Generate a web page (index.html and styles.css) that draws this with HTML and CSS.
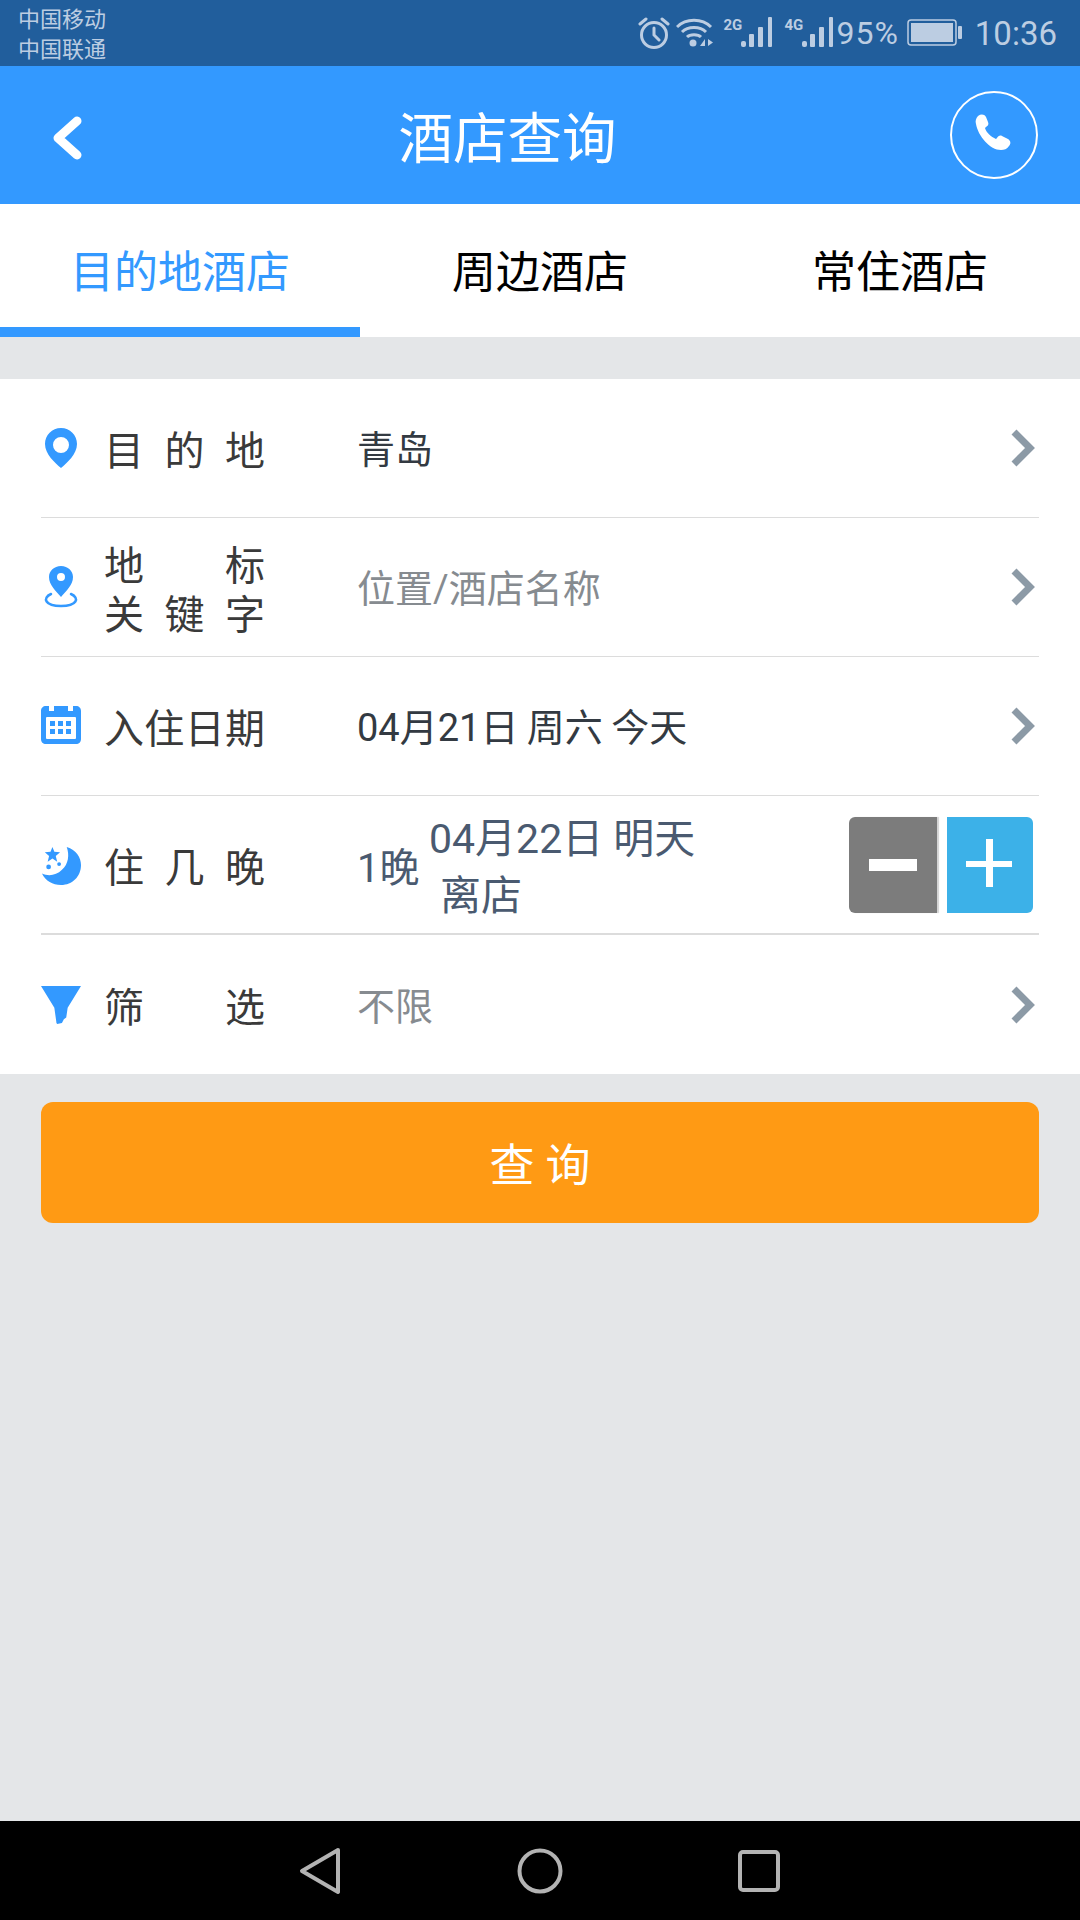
FILE: index.html
```html
<!DOCTYPE html>
<html>
<head>
    <title>酒店查询</title>
    <link rel="stylesheet" href="styles.css">
</head>
<body>
    <div class="app">
        <div class="status-bar">
            <div class="carriers">
                <div>中国移动</div>
                <div>中国联通</div>
            </div>
            <div class="status-icons">
                <svg class="st-alarm" width="32" height="34" viewBox="0 0 32 34" fill="none" stroke="#bccde2" stroke-width="3">
                    <circle cx="16" cy="19" r="12.500"/>
                    <path d="M16 12v7l5 5M2 8l6-5M30 8l-6-5" stroke-linecap="round"/>
                </svg>
                <svg class="st-wifi" width="38" height="32" viewBox="0 0 38 32" fill="none" stroke="#bccde2" stroke-width="3">
                    <path d="M1 10c9-9 25-9 34 0M6 15c6-6 18-6 24 0M11 20c3-3 11-3 14 0"/>
                    <circle cx="17" cy="26" r="3.500" fill="#bccde2" stroke="none"/>
                    <path d="M29 22l-5 7h5zM32 22l5 3.500-5 3.500z" fill="#bccde2" stroke="none"/>
                </svg>
                <div class="signal">
                    <span class="net">2G</span>
                    <svg width="34" height="32" viewBox="0 0 34 32" fill="#bccde2">
                        <rect x="0" y="24" width="5" height="6" rx="2"/>
                        <rect x="8" y="17" width="5" height="13" rx="1"/>
                        <rect x="17" y="10" width="5" height="20" rx="1"/>
                        <rect x="27" y="0" width="4" height="30" rx="1"/>
                    </svg>
                </div>
                <div class="signal">
                    <span class="net">4G</span>
                    <svg width="34" height="32" viewBox="0 0 34 32" fill="#bccde2">
                        <rect x="0" y="24" width="5" height="6" rx="2"/>
                        <rect x="8" y="17" width="5" height="13" rx="1"/>
                        <rect x="17" y="10" width="5" height="20" rx="1"/>
                        <rect x="27" y="0" width="4" height="30" rx="1"/>
                    </svg>
                </div>
                <span class="pct">95%</span>
                <svg class="st-batt" width="56" height="28" viewBox="0 0 56 28" fill="none">
                    <rect x="1" y="1" width="48" height="25" rx="3" stroke="#bccde2" stroke-width="1.500"/>
                    <rect x="4" y="4" width="42" height="19" fill="#bccde2"/>
                    <rect x="51" y="7" width="4" height="13" rx="1" fill="#bccde2"/>
                </svg>
                <span class="clock">10:36</span>
            </div>
        </div>

        <div class="header">
            <svg class="back" width="36" height="44" viewBox="0 0 36 44" fill="none" stroke="#fff" stroke-width="9" stroke-linecap="round" stroke-linejoin="round">
                <path d="M27 5L8 22l19 17"/>
            </svg>
            <h1>酒店查询</h1>
            <div class="call-btn">
                <svg width="44" height="44" viewBox="0 0 44 44" fill="#fff">
                    <path d="M6 3c3-2 6-2 8 1l2 5c1 2 0 4-2 5l-1 1c1 4 6 9 11 11l1-1c1-2 3-3 5-2l6 3c3 2 3 5 1 7-2 3-5 4-8 4C18 37 6 23 4 11c-1-3 0-6 2-8z"/>
                </svg>
            </div>
        </div>

        <div class="tabs">
            <div class="tab active">目的地酒店</div>
            <div class="tab">周边酒店</div>
            <div class="tab">常住酒店</div>
        </div>

        <div class="form">
            <div class="row">
                <div class="row-icon">
                    <svg width="34" height="42" viewBox="0 0 34 42">
                        <path fill-rule="evenodd" fill="#3399ff" d="M17 1C8 1 1 8 1 17c0 10 10 19 16 24 6-5 16-14 16-24C33 8 26 1 17 1zm0 9a8 8 0 1 1 0 16 8 8 0 0 1 0-16z"/>
                    </svg>
                </div>
                <div class="label">目的地</div>
                <div class="value dark">青岛</div>
                <svg class="arrow" width="26" height="38" viewBox="0 0 26 38" fill="none" stroke="#8c9aa6" stroke-width="7"><path d="M4 3l16 16L4 35"/></svg>
            </div>
            <div class="row">
                <div class="row-icon">
                    <svg width="36" height="42" viewBox="0 0 36 42">
                        <path fill-rule="evenodd" fill="#3399ff" d="M18 0C11 0 6 5 6 11c0 8 7 14 12 20 5-6 12-12 12-20C30 5 25 0 18 0zm0 7a4 4 0 1 1 0 8 4 4 0 0 1 0-8z"/>
                        <path d="M8 28c-9 4-6 12 10 12s19-8 10-12" fill="none" stroke="#3399ff" stroke-width="2.500" stroke-linecap="round"/>
                    </svg>
                </div>
                <div class="label two-line">
                    <div>地标</div>
                    <div>关键字</div>
                </div>
                <div class="value muted">位置/酒店名称</div>
                <svg class="arrow" width="26" height="38" viewBox="0 0 26 38" fill="none" stroke="#8c9aa6" stroke-width="7"><path d="M4 3l16 16L4 35"/></svg>
            </div>
            <div class="row">
                <div class="row-icon">
                    <svg width="40" height="40" viewBox="0 2 40 40">
                        <path fill="#3399ff" d="M5 2h3v5h5V2h14v5h5V2h3c3 0 5 2 5 5v28c0 3-2 5-5 5H5c-3 0-5-2-5-5V7c0-3 2-5 5-5z"/>
                        <rect x="5" y="13" width="30" height="22" rx="1" fill="#fff"/>
                        <g fill="#3399ff">
                            <rect x="9" y="17" width="5" height="5"/><rect x="17" y="17" width="5" height="5"/><rect x="25" y="17" width="5" height="5"/>
                            <rect x="9" y="25" width="5" height="5"/><rect x="17" y="25" width="5" height="5"/><rect x="25" y="25" width="5" height="5"/>
                        </g>
                    </svg>
                </div>
                <div class="label">入住日期</div>
                <div class="value dark">04月21日 周六 今天</div>
                <svg class="arrow" width="26" height="38" viewBox="0 0 26 38" fill="none" stroke="#8c9aa6" stroke-width="7"><path d="M4 3l16 16L4 35"/></svg>
            </div>
            <div class="row row-thick">
                <div class="row-icon">
                    <svg width="42" height="42" viewBox="0 0 42 42">
                        <path fill="#3399ff" d="M27 2C37 5 42 13 42 21C42 33 33 42 21 42C12 42 5 38 1 30C8 33 16 32 22 26C29 20 30 10 27 2z"/>
                        <path fill="#3399ff" d="M12 2l2 5 6 .5-4.500 4 1.500 6-5-3.200-5 3.200 1.500-6-4.500-4 6-.5z"/>
                        <circle cx="8" cy="23" r="2.500" fill="#3399ff"/>
                        <circle cx="19" cy="20" r="2" fill="#3399ff"/>
                    </svg>
                </div>
                <div class="label">住几晚</div>
                <div class="nights">1晚</div>
                <div class="checkout">
                    <div>04月22日 明天</div>
                    <div class="checkout-sub">离店</div>
                </div>
                <div class="stepper">
                    <div class="step minus"><span class="minus-bar"></span></div>
                    <div class="step plus"><span class="plus-h"></span><span class="plus-v"></span></div>
                </div>
            </div>
            <div class="row">
                <div class="row-icon">
                    <svg width="42" height="42" viewBox="0 0 42 42">
                        <path fill="#3399ff" d="M0 1H42L28 24L26.500 34L24 36L22 40L17 41Q16 41 16 38L14 24z"/>
                    </svg>
                </div>
                <div class="label">筛选</div>
                <div class="value muted">不限</div>
                <svg class="arrow" width="26" height="38" viewBox="0 0 26 38" fill="none" stroke="#8c9aa6" stroke-width="7"><path d="M4 3l16 16L4 35"/></svg>
            </div>
        </div>

        <button class="search-btn">查 询</button>

        <div class="spacer"></div>

        <div class="nav-bar">
            <svg width="44" height="48" viewBox="0 0 44 48" fill="none" stroke="#b3b3b3" stroke-width="4" stroke-linejoin="round">
                <path d="M40 3L4 24l36 21z"/>
            </svg>
            <svg width="46" height="46" viewBox="0 0 46 46" fill="none" stroke="#b3b3b3" stroke-width="4">
                <circle cx="23" cy="23" r="20.500"/>
            </svg>
            <svg width="42" height="42" viewBox="0 0 42 42" fill="none" stroke="#b3b3b3" stroke-width="4">
                <rect x="2" y="2" width="38" height="38" rx="3"/>
            </svg>
        </div>
    </div>
</body>
</html>
```

FILE: styles.css
```css
* {
    box-sizing: border-box;
}

body {
    margin: 0;
    font-family: Roboto, "Noto Sans CJK SC", sans-serif;
    background: #e4e6e8;
}

.app {
    width: 1080px;
    height: 1920px;
    display: flex;
    flex-direction: column;
    overflow: hidden;
}

.status-bar {
    height: 66px;
    padding: 5px 23px 0 18px;
    background: #215e9c;
    color: #bccde2;
    display: flex;
    justify-content: space-between;
}

.carriers {
    font-size: 22px;
    line-height: 30px;
}

.status-icons {
    display: flex;
    align-items: center;
    height: 56px;
}

.st-wifi {
    margin-left: 6px;
}

.signal {
    display: flex;
    align-items: flex-end;
    margin-left: 9px;
}

.net {
    font-size: 15px;
    font-weight: 700;
    line-height: 16px;
    margin-bottom: 16px;
    margin-right: -8px;
    width: 26px;
}

.pct {
    font-size: 32px;
    margin-left: 0;
    letter-spacing: 1px;
}

.st-batt {
    margin-left: 8px;
}

.clock {
    font-size: 33px;
    margin-left: 12px;
}

.header {
    height: 138px;
    background: #3399ff;
    display: flex;
    align-items: center;
    justify-content: center;
    position: relative;
}

.header h1 {
    margin: -2px 0 0 -65px;
    font-size: 54.500px;
    font-weight: 400;
    color: #fff;
}

.back {
    position: absolute;
    left: 50px;
    top: 50px;
}

.call-btn {
    position: absolute;
    left: 950px;
    top: 25px;
    width: 88px;
    height: 88px;
    border: 2px solid #fff;
    border-radius: 50%;
    display: flex;
    align-items: center;
    justify-content: center;
}

.tabs {
    height: 133px;
    background: #fff;
    display: flex;
}

.tab {
    width: 360px;
    height: 133px;
    padding-bottom: 4px;
    display: flex;
    align-items: center;
    justify-content: center;
    font-size: 44px;
    color: #000;
}

.tab.active {
    color: #3399ff;
    border-bottom: 10px solid #3399ff;
    padding: 6px 0 0;
}

.form {
    margin-top: 42px;
    padding: 0 41px;
    background: #fff;
}

.row {
    height: 139px;
    display: flex;
    align-items: center;
    border-bottom: 1px solid #dcdcdc;
}

.row-thick {
    border-bottom-width: 2px;
}

.row:last-child {
    border-bottom: none;
}

.row-icon {
    width: 40px;
    margin-right: 23px;
    display: flex;
    justify-content: center;
}

.label {
    width: 161px;
    margin-top: 7px;
    font-size: 40px;
    line-height: 49px;
    color: #3a3a3a;
    text-align: justify;
    text-align-last: justify;
}

.value {
    margin-left: 92px;
    margin-bottom: 3px;
    flex: 1;
    font-size: 38px;
    word-spacing: -1px;
}

.value.dark {
    color: #333a42;
}

.value.muted {
    color: #868b90;
}

.arrow {
    margin-right: 3px;
}

.nights {
    margin-left: 92px;
    width: 72px;
    font-size: 40px;
    color: #4a5a70;
}

.checkout {
    flex: 1;
    margin-top: 6px;
    font-size: 41px;
    line-height: 57px;
    color: #4a5a70;
}

.checkout-sub {
    padding-left: 11px;
}

.stepper {
    display: flex;
    gap: 10px;
    margin-right: 6px;
}

.step {
    height: 96px;
    position: relative;
}

.minus {
    width: 88px;
    background: #7c7c7c;
    border-radius: 6px 0 0 6px;
    box-shadow: 2px 0 1px #d4d4d4;
}

.plus {
    width: 86px;
    background: #3cb1e8;
    border-radius: 0 6px 6px 0;
}

.minus-bar {
    position: absolute;
    left: 20px;
    top: 42px;
    width: 48px;
    height: 12px;
    background: #fff;
}

.plus-h {
    position: absolute;
    left: 19px;
    top: 44px;
    width: 46px;
    height: 6px;
    background: #fff;
}

.plus-v {
    position: absolute;
    left: 39px;
    top: 22px;
    width: 7px;
    height: 48px;
    background: #fff;
}

.search-btn {
    display: block;
    margin: 28px 41px 0;
    width: 998px;
    height: 121px;
    border: none;
    border-radius: 12px;
    background: #ff9a14;
    color: #fff;
    font-family: inherit;
    font-size: 45px;
}

.spacer {
    flex: 1;
}

.nav-bar {
    height: 99px;
    background: #000;
    display: flex;
    align-items: center;
    gap: 175px;
    padding-left: 298px;
}
```
